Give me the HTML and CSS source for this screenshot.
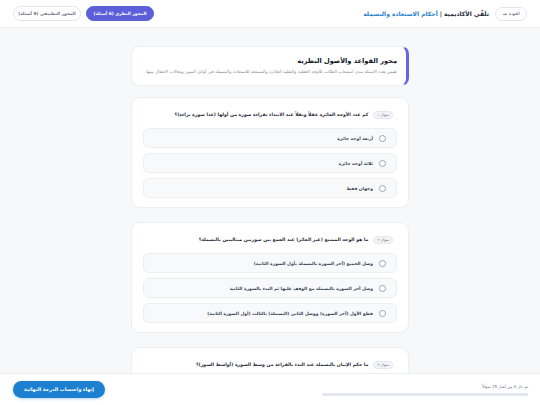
FILE: index.html
```html
<!DOCTYPE html>
<html lang="ar" dir="rtl">
<head>
<meta charset="utf-8">
<title>أحكام الاستعاذة والبسملة</title>
<link rel="stylesheet" href="styles.css">
</head>
<body>
<header class="topbar">
  <div class="brand">
    <button class="back">العودة <span class="arrow">→</span></button>
    <div class="title"><span class="academy">تلَقّي الأكاديمية</span> <span class="sep">|</span> <span class="course">أحكام الاستعاذة والبسملة</span></div>
  </div>
  <nav class="tabs">
    <button class="tab active">المحور النظري (6 أسئلة)</button>
    <button class="tab">المحور التطبيقي (9 أسئلة)</button>
  </nav>
</header>

<main class="content">
  <section class="intro">
    <h1>محور القواعد والأصول النظرية</h1>
    <p>تقيس هذه الأسئلة مدى استيعاب الطالب للأوجه العقلية والنقلية الجائزة والممتنعة للاستعاذة والبسملة في أوائل السور وبحالات الانتقال بينها.</p>
  </section>

  <section class="qcard">
    <div class="qhead"><span class="badge">سؤال ١</span><h2>كم عدد الأوجه الجائزة عقلاً ونقلاً عند الابتداء بقراءة سورة من أولها (عدا سورة براءة)؟</h2></div>
    <label class="opt"><span class="radio"></span>أربعة أوجه جائزة</label>
    <label class="opt"><span class="radio"></span>ثلاثة أوجه جائزة</label>
    <label class="opt"><span class="radio"></span>وجهان فقط</label>
  </section>

  <section class="qcard">
    <div class="qhead"><span class="badge">سؤال ٢</span><h2>ما هو الوجه الممتنع (غير الجائز) عند الجمع بين سورتين متتاليتين بالبسملة؟</h2></div>
    <label class="opt"><span class="radio"></span>وصل الجميع (آخر السورة بالبسملة بأول السورة الثانية)</label>
    <label class="opt"><span class="radio"></span>وصل آخر السورة بالبسملة مع الوقف عليها ثم البدء بالسورة الثانية</label>
    <label class="opt"><span class="radio"></span>قطع الأول (آخر السورة) ووصل الثاني (البسملة) بالثالث (أول السورة الثانية)</label>
  </section>

  <section class="qcard">
    <div class="qhead"><span class="badge">سؤال ٣</span><h2>ما حكم الإتيان بالبسملة عند البدء بالقراءة من وسط السورة (أواسط السور)؟</h2></div>
    <label class="opt"><span class="radio"></span>الجواز مع التخيير</label>
    <label class="opt"><span class="radio"></span>الوجوب</label>
  </section>
</main>

<footer class="bottombar">
  <div class="progress">
    <div class="ptext">تم حل 0 من أصل 15 سؤالاً</div>
    <div class="track"><div class="fill"></div></div>
  </div>
  <button class="finish">إنهاء واحتساب الدرجة النهائية</button>
</footer>
</body>
</html>
```

FILE: styles.css
```css
* { box-sizing: border-box; }
html, body { margin: 0; padding: 0; }
body {
  font-family: "DejaVu Sans", sans-serif;
  background: #f7f8fa;
  color: #1f2937;
  height: 405px;
  overflow: hidden;
}
button { font-family: inherit; cursor: pointer; }

.topbar {
  height: 28px;
  background: #ffffff;
  border-bottom: 1px solid #eceef2;
  display: flex;
  align-items: center;
  justify-content: space-between;
  padding: 0 13px;
}
.brand { display: flex; align-items: center; gap: 6px; }
.back {
  height: 14px;
  width: 32px;
  padding: 0;
  border: 1px solid #e3e6eb;
  background: #fff;
  border-radius: 8px;
  font-size: 4.3px;
  color: #374151;
  display: flex;
  align-items: center;
  justify-content: center;
  gap: 2px;
}
.back .arrow { font-size: 5px; }
.title { font-size: 6px; font-weight: 700; white-space: nowrap; }
.academy { color: #1f2937; }
.sep { color: #374151; }
.course { color: #1f7fc8; }

.tabs { display: flex; gap: 5px; }
.tab {
  height: 15px;
  width: 68px;
  padding: 0;
  border-radius: 8px;
  font-size: 4.3px;
  font-weight: 600;
  border: 1px solid #e3e6eb;
  background: #fff;
  color: #6b7280;
}
.tab.active {
  background: #5d5fd8;
  border-color: #5d5fd8;
  color: #fff;
}

.content {
  width: 278px;
  margin: 18px auto 0;
  display: flex;
  flex-direction: column;
}
.intro {
  background: #fff;
  border: 1px solid #eceef2;
  border-right: 3px solid #6366e8;
  border-radius: 8px;
  padding: 10px 9px 8px;
  height: 40px;
  margin-bottom: 11px;
}
.intro h1 {
  margin: 0 0 4px;
  font-size: 6.6px;
  font-weight: 700;
  color: #111827;
}
.intro p {
  margin: 0;
  font-size: 4.4px;
  color: #8a909a;
  white-space: nowrap;
}

.qcard {
  background: #fff;
  border: 1px solid #eceef2;
  border-radius: 9px;
  padding: 12px 11px 9px;
  display: flex;
  flex-direction: column;
  gap: 5px;
  margin-bottom: 14px;
}
.qhead {
  display: flex;
  align-items: center;
  gap: 5px;
  padding: 0 4px;
  margin-bottom: 4px;
  height: 9px;
}
.badge {
  font-size: 3.6px;
  color: #6b7280;
  background: #f3f4f6;
  border: 1px solid #e5e7eb;
  border-radius: 4px;
  padding: 1px 3px;
  white-space: nowrap;
}
.qhead h2 {
  margin: 0;
  font-size: 4.6px;
  font-weight: 700;
  color: #1f2937;
  white-space: nowrap;
}
.opt {
  height: 20px;
  flex-shrink: 0;
  display: flex;
  align-items: center;
  gap: 6px;
  padding: 0 10px;
  background: #f8f9fb;
  border: 1px solid #eceef2;
  border-radius: 6px;
  font-size: 4.4px;
  font-weight: 600;
  color: #374151;
  white-space: nowrap;
}
.radio {
  width: 7px;
  height: 7px;
  border: 1px solid #9ca3af;
  border-radius: 50%;
  background: #fff;
  flex-shrink: 0;
}

.bottombar {
  position: fixed;
  left: 0;
  right: 0;
  bottom: 0;
  height: 32px;
  background: #fff;
  border-top: 1px solid #eceef2;
  display: flex;
  align-items: center;
  justify-content: space-between;
  padding: 0 12px 0 13px;
}
.progress { width: 206px; display: flex; flex-direction: column; gap: 4px; }
.ptext { font-size: 4px; color: #6b7280; }
.track { height: 3px; background: #e3e7ee; border-radius: 2px; overflow: hidden; }
.fill { width: 0; height: 100%; background: #1f7fc8; }
.finish {
  width: 92px;
  height: 17px;
  border: none;
  border-radius: 9px;
  background: #1d7fcf;
  color: #fff;
  font-size: 4.8px;
  font-weight: 700;
  box-shadow: 0 1px 3px rgba(29,127,207,0.35);
}
```
